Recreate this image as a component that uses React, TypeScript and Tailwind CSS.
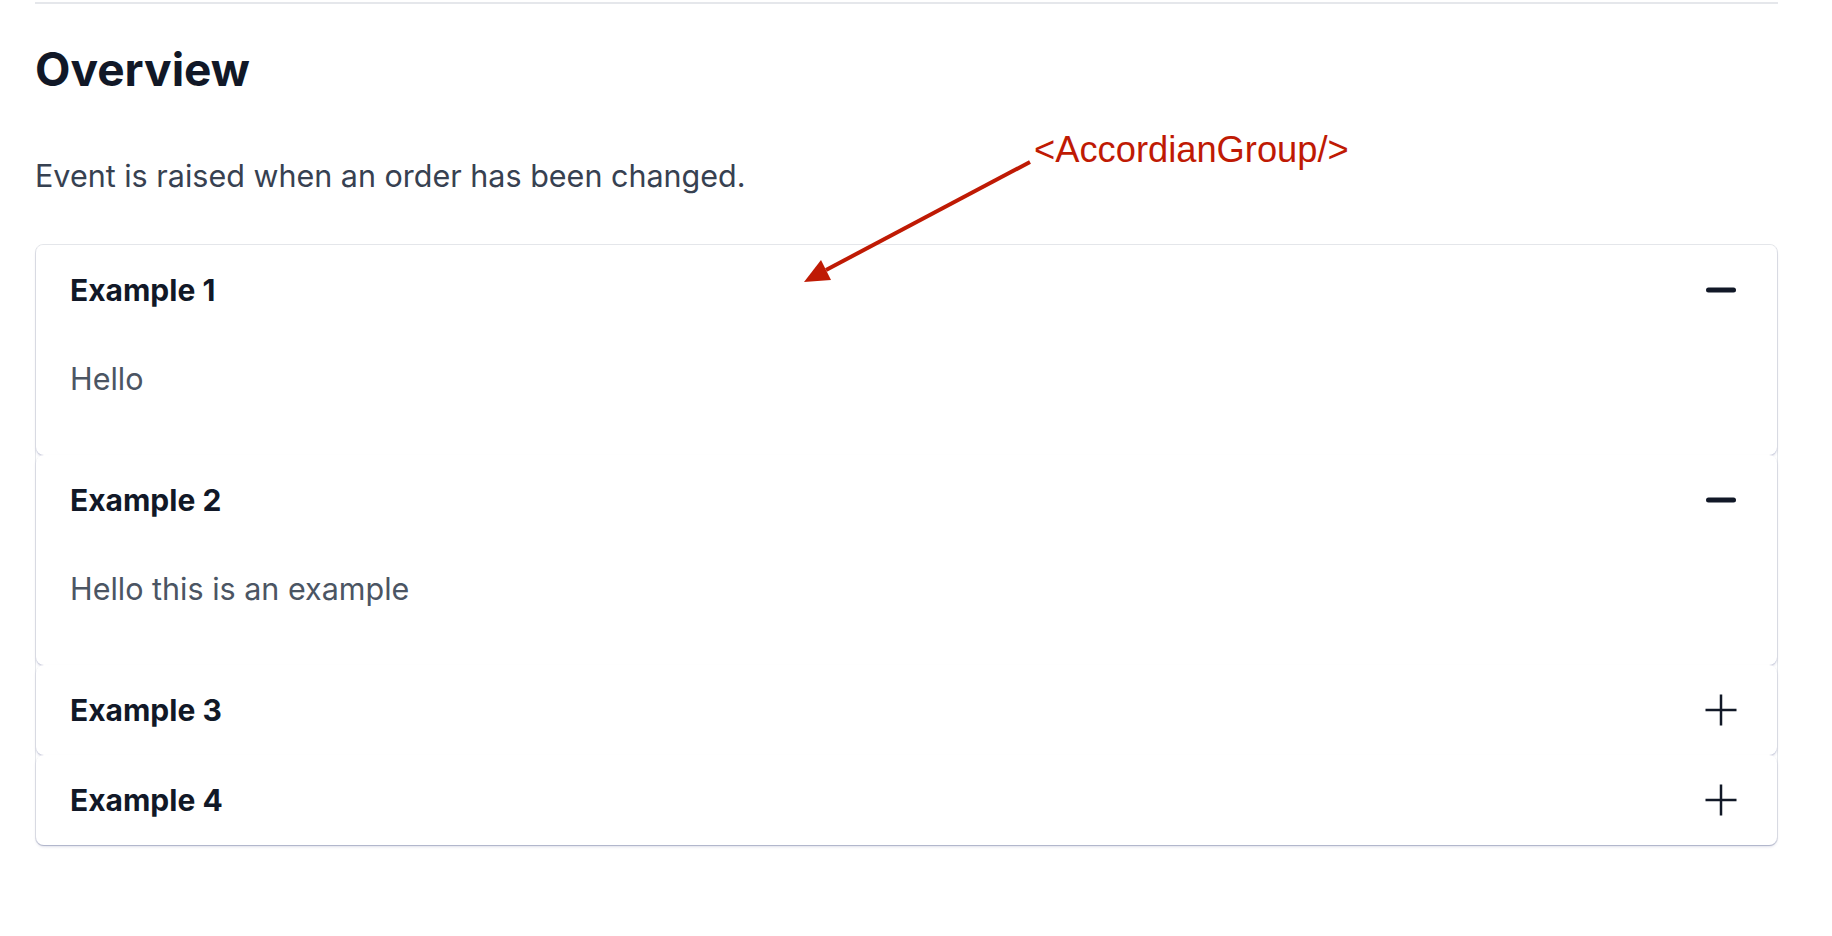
import { useState } from "react";

const items = [
  { title: "Example 1", body: "Hello" },
  { title: "Example 2", body: "Hello this is an example" },
  { title: "Example 3", body: "Example 3 content" },
  { title: "Example 4", body: "Example 4 content" },
];

function MinusIcon() {
  return (
    <svg viewBox="0 0 32 32" className="h-8 w-8 text-[#111827]" fill="currentColor">
      <rect x="1" y="13.5" width="30" height="5" rx="2.5" />
    </svg>
  );
}

function PlusIcon() {
  return (
    <svg viewBox="0 0 32 32" className="h-8 w-8 text-[#111827]" stroke="currentColor" strokeWidth="2.5" fill="none">
      <path d="M16 0.5v31M0.5 16h31" />
    </svg>
  );
}

export default function App() {
  const [open, setOpen] = useState<number[]>([0, 1]);

  function toggle(i: number) {
    setOpen((o) => (o.includes(i) ? o.filter((x) => x !== i) : [...o, i]));
  }

  return (
    <div className="relative min-h-screen bg-white font-['Inter',sans-serif]">
      <main className="pl-[35px] pr-[54px] pt-[2px]">
        <div className="h-[2px] bg-[#e5e7eb]" />

        <h2 className="mt-[38px] text-[46px] leading-[54px] font-bold text-[#111827]">Overview</h2>

        <p className="mt-[57px] text-[30.5px] leading-[45px] text-[#374151]">Event is raised when an order has been changed.</p>

        <div className="mt-[46px] rounded-lg border border-[#e5e7eb]">
          {items.map((item, i) => {
            const isOpen = open.includes(i);
            return (
              <div
                key={item.title}
                className="rounded-lg bg-white shadow-[0_1px_1px_0_rgba(30,41,110,0.18),0_2px_3px_0_rgba(30,41,110,0.12)]"
              >
                <button
                  onClick={() => toggle(i)}
                  className="flex h-[90px] w-full items-center justify-between pl-[34px] pr-[40px] text-left"
                >
                  <span className="text-[30px] leading-[45px] font-bold text-[#111827]">{item.title}</span>
                  {isOpen ? <MinusIcon /> : <PlusIcon />}
                </button>
                {isOpen && (
                  <div className="pl-[34px] pr-[40px] pt-[21px] pb-[54px]">
                    <p className="text-[30.5px] leading-[45px] text-[#4b5563]">{item.body}</p>
                  </div>
                )}
              </div>
            );
          })}
        </div>
      </main>

      {/* annotation overlay */}
      <span className="absolute left-[1034px] top-[132px] font-['Liberation_Sans',Arial,sans-serif] text-[36.3px] leading-none text-[#bf1a04]">
        &lt;AccordianGroup/&gt;
      </span>
      <svg className="pointer-events-none absolute left-[790px] top-[150px] h-[140px] w-[250px]" viewBox="0 0 250 140">
        <line x1="240" y1="12" x2="36" y2="120" stroke="#bf1a04" strokeWidth="4" />
        <polygon points="14,132 41,130 31,110" fill="#bf1a04" />
      </svg>
    </div>
  );
}
